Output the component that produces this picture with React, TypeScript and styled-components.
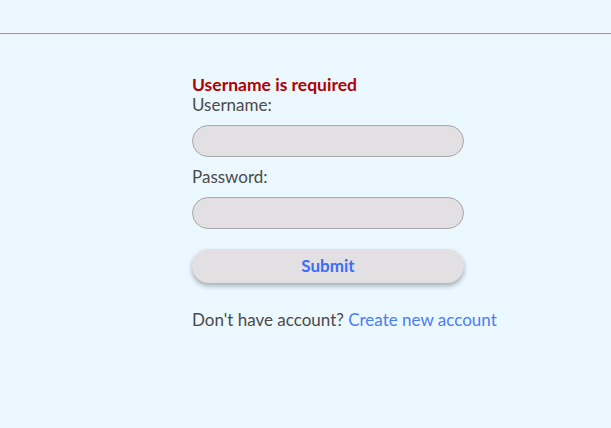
import React from "react";
import styled, { createGlobalStyle } from "styled-components";

const Global = createGlobalStyle`
  html, body { margin: 0; padding: 0; background: #ebf8ff; }
  body { font-family: "Lato", "Noto Sans", sans-serif; }
`;

const Page = styled.div`
  min-height: 428px;
  background: #ebf8ff;
`;

const Header = styled.header`
  height: 33px;
  border-bottom: 1px solid #9a9a9a;
  box-shadow: 0 1px 0 #f0f0f0;
`;

const Form = styled.form`
  display: flex;
  flex-direction: column;
  width: 272px;
  margin: 41px 0 0 192px;
`;

const ErrorText = styled.div`
  color: #b00000;
  font-weight: 700;
  font-size: 17.5px;
  line-height: 20px;
`;

const Label = styled.label`
  color: #4a4a4a;
  font-size: 17px;
  line-height: 20px;
  margin-bottom: 10px;
`;

const Input = styled.input`
  box-sizing: border-box;
  width: 272px;
  height: 32px;
  border-radius: 16px;
  border: 1px solid #a8a8a8;
  background: #e2e0e2;
  margin-bottom: 10px;
  outline: none;
`;

const Button = styled.button`
  margin-top: 10px;
  height: 34px;
  width: 272px;
  border: none;
  border-radius: 17px;
  background: #e2e0e2;
  color: #3b6ef5;
  font-family: inherit;
  font-weight: 700;
  font-size: 17px;
  padding: 0 0 2px;
  box-shadow: 0 3px 5px rgba(0, 0, 0, 0.3);
`;

const Footer = styled.p`
  margin: 27px 0 0;
  color: #4a4a4a;
  font-size: 17px;
  line-height: 20px;
  white-space: nowrap;
`;

const Link = styled.a`
  color: #4a7cf7;
  text-decoration: none;
`;

export default function App() {
  return (
    <Page>
      <Global />
      <Header />
      <Form onSubmit={(e) => e.preventDefault()}>
        <ErrorText>Username is required</ErrorText>
        <Label htmlFor="u">Username:</Label>
        <Input id="u" type="text" />
        <Label htmlFor="p">Password:</Label>
        <Input id="p" type="password" />
        <Button type="submit">Submit</Button>
        <Footer>
          Don't have account? <Link href="#">Create new account</Link>
        </Footer>
      </Form>
    </Page>
  );
}
